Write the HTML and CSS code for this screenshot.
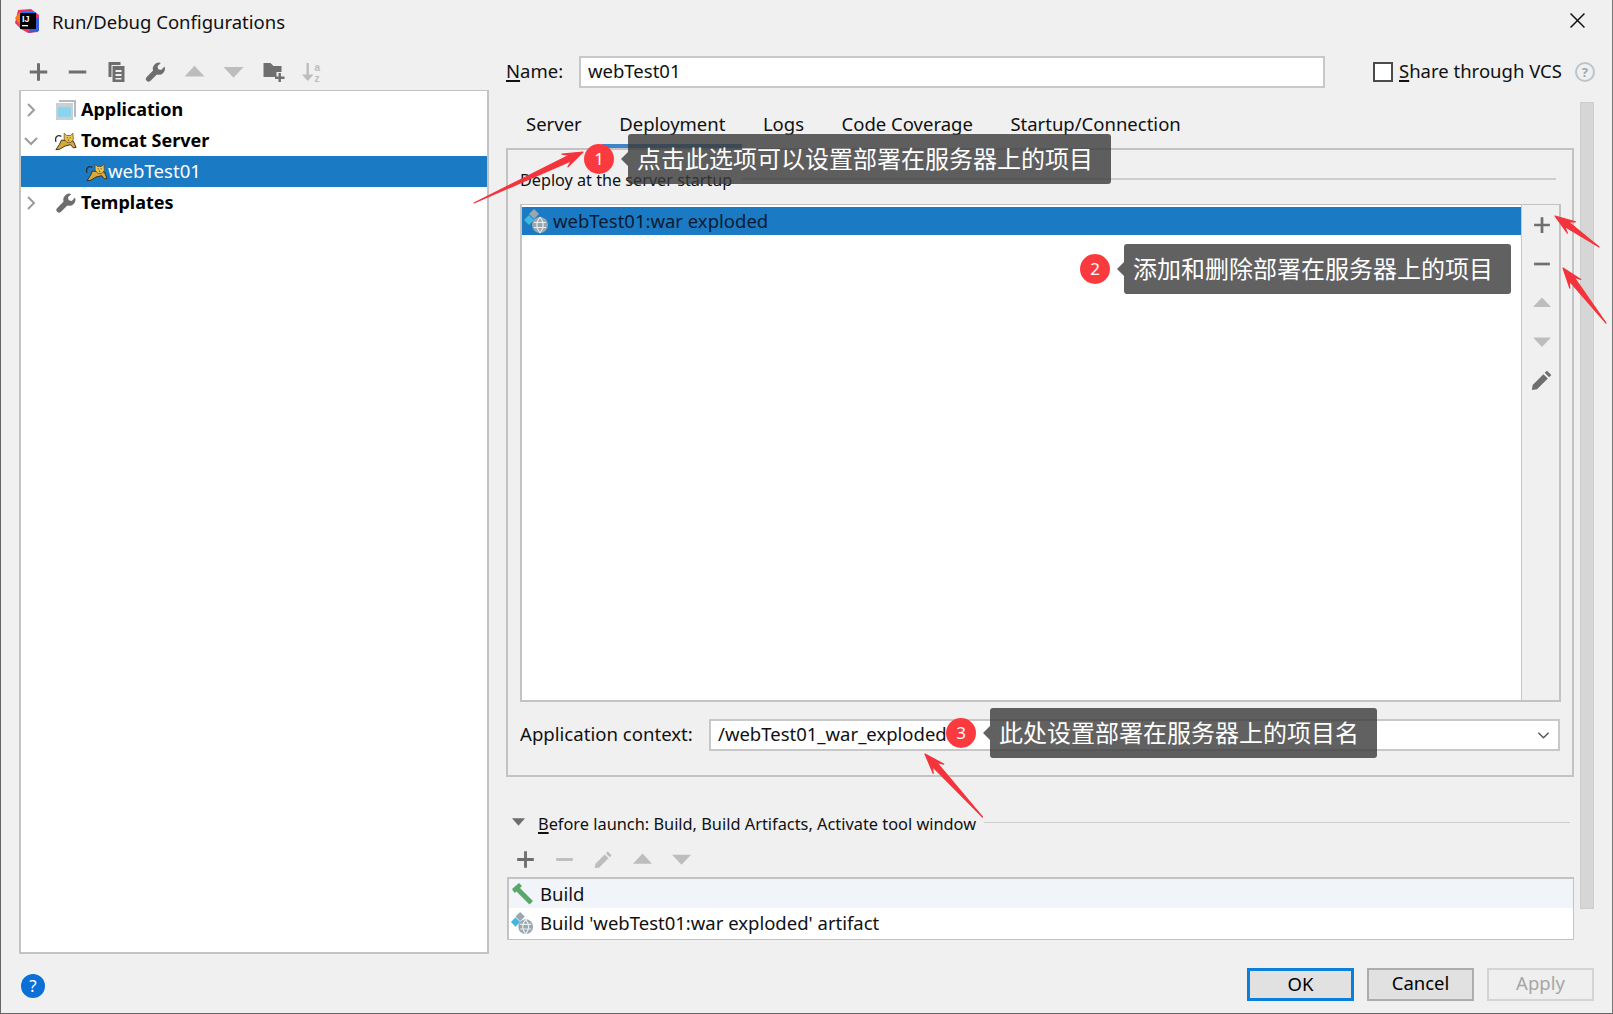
FILE: index.html
```html
<!DOCTYPE html>
<html lang="en">
<head>
<meta charset="utf-8">
<title>Run/Debug Configurations</title>
<link rel="stylesheet" href="styles.css">
</head>
<body>
<svg class="sprite" width="0" height="0" aria-hidden="true">
  <defs>
    <symbol id="i-plus" viewBox="0 0 16 16"><path d="M6.800 1h2.400v5.800H15v2.400H9.200V15H6.800V9.200H1V6.800h5.800z"/></symbol>
    <symbol id="i-minus" viewBox="0 0 16 16"><path d="M1 6.800h14v2.400H1z"/></symbol>
    <symbol id="i-up" viewBox="0 0 16 16"><path d="M8 3l8 8.500H0z"/></symbol>
    <symbol id="i-down" viewBox="0 0 16 16"><path d="M0 4h16l-8 8.500z"/></symbol>
    <symbol id="i-pencil" viewBox="0 0 20 20"><path d="M14.500 1.500l4 4-2 2-4-4zM11.300 4.700l4 4L5.500 18.500 0.800 19.200l.7-4.700z"/></symbol>
    <symbol id="i-wrench" viewBox="0 0 20 20"><path d="M19 4.600l-3.300 3.300-3-.7-.7-3L15.300 1a6 6 0 0 0-7.700 7.600L1 15.200a2.700 2.700 0 0 0 3.800 3.800l6.600-6.600A6 6 0 0 0 19 4.600z"/></symbol>
    <symbol id="i-tomcat" viewBox="0 0 24 20">
      <path d="M1 11C-.5 5 3 3 7 5" fill="none" stroke="#2e2e2e" stroke-width="1.400"/>
      <path d="M7 9l13 1 3 7-3 .5-3-3.500-6 1.500-6 3.500-4 .5 4-6z" fill="#d8a93a" stroke="#2e2a1c" stroke-width="1" stroke-linejoin="round"/>
      <path d="M10 1.500L12.500 4h4.500L19.500 1.500 20 8l-2.500 3.500h-4.500L10 8z" fill="#f0c452" stroke="#5a4a20" stroke-width=".8" stroke-linejoin="round"/>
      <path d="M12.800 6.500h1M16 6.500h1M14 9h1.500" stroke="#222" stroke-width="1"/>
    </symbol>
    <symbol id="i-artifact" viewBox="0 0 26 26">
      <path d="M11 1l5 5-5 5-5-5z" fill="#9aa7b0"/>
      <path d="M6 7l5 5-5 5-5-5z" fill="#40b6e0"/>
      <circle cx="17" cy="17" r="8" fill="#9aa7b0"/>
      <path d="M11 14.500h12M11 19.500h12M17 9c-4 5-4 11 0 16M17 9c4 5 4 11 0 16" fill="none" stroke="#e8eef2" stroke-width="1.200"/>
    </symbol>
  </defs>
</svg>

<div class="window">
  <header class="titlebar">
    <svg class="logo" viewBox="0 0 24 24">
      <path d="M3 1L16 0l8 6-1 17-10 1-7-4-6-6z" fill="#e8336d"/>
      <path d="M0 9l5-6 5 8-5 5z" fill="#f97a12"/>
      <path d="M14 24l10-2V8l-7 4z" fill="#3a5bd9"/>
      <path d="M6 3h15v15l-15 1z" fill="#087cfa"/>
      <rect x="5" y="4" width="16" height="16" fill="#000"/>
      <rect x="7" y="16" width="6" height="1.300" fill="#fff"/>
      <text x="7" y="13" class="logo-text">IJ</text>
    </svg>
    <span class="title">Run/Debug Configurations</span>
    <svg class="close" viewBox="0 0 14 14"><path d="M.5.5l13 13M13.500.5l-13 13" stroke="#111" stroke-width="1.400" fill="none"/></svg>
  </header>

  <div class="main">
    <aside class="left">
      <div class="toolbar tree-tools">
        <svg class="ic dark"><use href="#i-plus"/></svg>
        <svg class="ic dark"><use href="#i-minus"/></svg>
        <svg class="ic dark" viewBox="0 0 18 20"><path d="M1 0h12v3H4v12H1zM5 4h12v16H5zM8 8v2h6V8zm0 4v2h6v-2zm0 4v1.500h6V16z" fill-rule="evenodd"/></svg>
        <svg class="ic dark"><use href="#i-wrench"/></svg>
        <svg class="ic off"><use href="#i-up"/></svg>
        <svg class="ic off"><use href="#i-down"/></svg>
        <svg class="ic dark" viewBox="-2 0 22 20"><path d="M0 1h7l3 3h8v6h-5v5H0z"/><path d="M15 11h2.400v3.500H21v2.400h-3.600V20H15v-3.100h-3.500v-2.400H15z"/></svg>
        <svg class="ic off sort" viewBox="0 0 20 20"><path d="M5 1h2.400v11.500H12L6.200 19 .5 12.500H5z"/><text x="13" y="9" class="sort-text">a</text><text x="13" y="19.500" class="sort-text">z</text></svg>
      </div>
      <div class="tree">
        <div class="row">
          <svg class="chev" viewBox="0 0 10 14"><path d="M2 1l6 6-6 6" fill="none" stroke="#9c9c9c" stroke-width="2"/></svg>
          <svg class="node" viewBox="0 0 20 20"><path d="M3 0h17v17h-2V2H3z" fill="#b5bcc1"/><rect x="0" y="3" width="17" height="17" fill="#c9d0d5"/><rect x="2" y="7" width="13" height="10" fill="#8bd3ef"/></svg>
          <span class="tree-label">Application</span>
        </div>
        <div class="row">
          <svg class="chev" viewBox="0 0 14 10"><path d="M1 2l6 6 6-6" fill="none" stroke="#9c9c9c" stroke-width="2"/></svg>
          <svg class="node"><use href="#i-tomcat"/></svg>
          <span class="tree-label">Tomcat Server</span>
        </div>
        <div class="row selected">
          <svg class="node child"><use href="#i-tomcat"/></svg>
          <span class="tree-child">webTest01</span>
        </div>
        <div class="row">
          <svg class="chev" viewBox="0 0 10 14"><path d="M2 1l6 6-6 6" fill="none" stroke="#9c9c9c" stroke-width="2"/></svg>
          <svg class="node wrench"><use href="#i-wrench"/></svg>
          <span class="tree-label">Templates</span>
        </div>
      </div>
      <div class="help-round">?</div>
    </aside>

    <section class="right">
      <div class="name-row">
        <label class="name-label"><u>N</u>ame:</label>
        <div class="field name-field">webTest01</div>
        <span class="checkbox"></span>
        <span class="share"><u>S</u>hare through VCS</span>
        <span class="help-small">?</span>
      </div>

      <div class="body">
        <div class="content">
          <nav class="tabs">
            <span class="tab">Server</span>
            <span class="tab active">Deployment</span>
            <span class="tab">Logs</span>
            <span class="tab">Code Coverage</span>
            <span class="tab">Startup/Connection</span>
          </nav>
          <div class="panel">
            <div class="group-title"><span>Deploy at the server startup</span><i class="rule"></i></div>
            <div class="deploy-list">
              <div class="deploy-rows">
                <div class="deploy-row">
                  <svg class="art"><use href="#i-artifact"/></svg>
                  <span>webTest01:war exploded</span>
                </div>
              </div>
              <div class="deploy-tools">
                <svg class="ic-side dark"><use href="#i-plus"/></svg>
                <svg class="ic-side dark"><use href="#i-minus"/></svg>
                <svg class="ic-side off"><use href="#i-up"/></svg>
                <svg class="ic-side off"><use href="#i-down"/></svg>
                <svg class="ic-side dark tall"><use href="#i-pencil"/></svg>
              </div>
            </div>
            <div class="context-row">
              <span class="context-label">Application context:</span>
              <div class="field context-field">
                <span>/webTest01_war_exploded</span>
                <svg class="combo" viewBox="0 0 14 9"><path d="M1.500 1.500L7 7l5.500-5.500" fill="none" stroke="#555" stroke-width="1.500"/></svg>
              </div>
            </div>
          </div>

          <div class="before">
            <svg class="tri" viewBox="0 0 14 8"><path d="M0 0h14L7 8z" fill="#6e6e6e"/></svg>
            <span class="before-label"><u>B</u>efore launch: Build, Build Artifacts, Activate tool window</span>
            <i class="rule thin"></i>
          </div>
          <div class="toolbar before-tools">
            <svg class="ic dark"><use href="#i-plus"/></svg>
            <svg class="ic off"><use href="#i-minus"/></svg>
            <svg class="ic off tall"><use href="#i-pencil"/></svg>
            <svg class="ic off"><use href="#i-up"/></svg>
            <svg class="ic off"><use href="#i-down"/></svg>
          </div>
          <div class="task-list">
            <div class="task first">
              <svg class="task-icon" viewBox="0 0 24 22"><path d="M2 6l7-6 3 3-2 2 13 13-3.500 3.500L6.500 8.500 4.500 10z" fill="#59a869"/></svg>
              <span>Build</span>
            </div>
            <div class="task">
              <svg class="task-icon"><use href="#i-artifact"/></svg>
              <span>Build 'webTest01:war exploded' artifact</span>
            </div>
          </div>
        </div>
        <div class="scrollbar"></div>
      </div>

      <footer class="buttons">
        <button class="btn primary">OK</button>
        <button class="btn">Cancel</button>
        <button class="btn disabled">Apply</button>
      </footer>
    </section>
  </div>
</div>

<div class="note note-1"><span class="badge">1</span><span class="bubble">点击此选项可以设置部署在服务器上的项目</span></div>
<div class="note note-2"><span class="badge">2</span><span class="bubble">添加和删除部署在服务器上的项目</span></div>
<div class="note note-3"><span class="badge">3</span><span class="bubble">此处设置部署在服务器上的项目名</span></div>

<svg class="arrows" viewBox="0 0 1613 1014">
  <polygon points="474,203 569,155.200 561.900,154.200 583,152 567.900,166.800 571.600,160.600"/>
  <polygon points="1599,247 1568.200,221.600 1575.400,221.800 1555,216 1567.400,233.200 1564.800,226.600"/>
  <polygon points="1606,323 1574,277.200 1580.800,279.500 1563,268 1569.800,288.100 1569.200,280.800"/>
  <polygon points="982.500,817 936.600,762.300 943.700,764.100 925,754 933.300,773.500 932.200,766.300"/>
</svg>
</body>
</html>
```

FILE: styles.css
```css
* { box-sizing: border-box; }
html, body { margin: 0; padding: 0; }
body {
  position: relative;
  width: 1613px;
  height: 1014px;
  overflow: hidden;
  font-family: "Noto Sans", "Liberation Sans", sans-serif;
  font-size: 18.5px;
  color: #111;
  background: #f0f0f0;
}
.sprite { position: absolute; }
u { text-underline-offset: 2px; text-decoration-thickness: 2px; }

.window {
  width: 1613px;
  height: 1014px;
  background: #f0f0f0;
  border-left: 1px solid #666;
  border-right: 1px solid #777;
  border-bottom: 1px solid #666;
}

/* title bar */
.titlebar {
  height: 44px;
  display: flex;
  align-items: center;
  padding-left: 14px;
  padding-right: 27px;
}
.logo { width: 24px; height: 24px; margin-right: 13px; margin-top: -2px; }
.logo-text { font: 700 9px "Liberation Sans", sans-serif; fill: #fff; }
.title { flex: 1; padding-bottom: 2px; }
.close { width: 15px; height: 15px; margin-top: -3px; }

/* layout */
.main { display: flex; padding-left: 18px; }
.left { width: 470px; flex: none; }
.right { width: 1106px; margin-left: 17px; flex: none; }

.toolbar { display: flex; align-items: center; }
.tree-tools { height: 46px; padding-top: 10px; }
.ic { width: 39px; height: 20px; flex: none; }
.dark { fill: #6e6e6e; }
.off { fill: #bdbdbd; }
.tall { height: 24px; }
.sort { overflow: visible; }
.sort-text { font: 700 10px "Liberation Sans", sans-serif; fill: #bdbdbd; }

/* tree */
.tree {
  height: 864px;
  background: #fff;
  border: 2px solid #c3c3c3;
  border-top-width: 1px;
  padding-top: 3px;
}
.row { height: 31px; display: flex; align-items: center; }
.chev { width: 14px; height: 14px; margin-left: 3px; flex: none; }
.node { width: 22px; height: 20px; margin-left: 17px; margin-right: 4px; flex: none; fill: #6e6e6e; }
.node.child { margin-left: 65px; margin-right: 0; }
.node.wrench { width: 20px; margin-left: 18px; margin-right: 5px; }
.tree-label { font-weight: 700; font-size: 18px; color: #000; padding-bottom: 2px; }
.tree-child { font-size: 18.600px; color: #fff; padding-bottom: 2px; }
.selected { background: #1a7ac4; }

.help-round {
  width: 24px;
  height: 24px;
  margin: 20px 0 0 2px;
  border-radius: 50%;
  background: #0a6fd6;
  color: #fff;
  font-size: 17px;
  line-height: 24px;
  text-align: center;
}

/* name row */
.name-row { height: 32px; margin-top: 12px; display: flex; align-items: center; }
.name-label { width: 73px; flex: none; padding-bottom: 4px; }
.field {
  height: 32px;
  background: #fff;
  border: 2px solid #c8c8c8;
  display: flex;
  align-items: center;
  padding: 0 0 4px 7px;
}
.name-field { width: 746px; }
.checkbox {
  width: 20px;
  height: 20px;
  margin-left: 48px;
  background: #fff;
  border: 2px solid #4a4a4a;
  flex: none;
}
.share { margin-left: 6px; padding-bottom: 4px; }
.help-small {
  width: 20px;
  height: 20px;
  margin-left: 13px;
  border: 2px solid #b9c4cc;
  border-radius: 50%;
  color: #9aa7b0;
  font-size: 13px;
  font-weight: 700;
  line-height: 16px;
  text-align: center;
  flex: none;
}

/* body */
.body { display: flex; margin-top: 14px; }
.content { width: 1068px; flex: none; }
.scrollbar {
  width: 14px;
  height: 807px;
  margin-left: 6px;
  background: #d6d6d6;
  border: 1px solid #cdcdcd;
}

.tabs { height: 46px; padding: 0 0 4px 20px; display: flex; align-items: center; gap: 37.500px; }
.tab { position: relative; }
.tab.active::after {
  content: "";
  position: absolute;
  left: -17px;
  right: -17px;
  top: 33px;
  height: 4px;
  background: #4083c9;
}

.panel {
  height: 629px;
  border: 2px solid #c3c3c3;
  padding: 20px 11px 0 12px;
}
.group-title { display: flex; align-items: center; height: 20px; font-size: 16.200px; margin-right: 5px; }
.rule { flex: 1; height: 2px; background: #cdcdcd; margin: 0 0 2px 10px; }
.rule.thin { height: 1px; margin: 0 0 0 8px; }

.deploy-list {
  height: 498px;
  margin-top: 14px;
  display: flex;
  background: #fff;
  border: 2px solid #c3c3c3;
  border-top-width: 1px;
}
.deploy-rows { flex: 1; padding-top: 2px; }
.deploy-row {
  height: 28px;
  background: #1a7ac4;
  display: flex;
  align-items: center;
  padding: 0 0 2px 1px;
  color: #0b1a33;
}
.art { width: 26px; height: 26px; margin: 2px 4px 0 0; flex: none; }
.deploy-tools {
  width: 38px;
  flex: none;
  background: #f0f0f0;
  border-left: 1px solid #c8c8c8;
  padding: 11px 0 0 2px;
  display: flex;
  flex-direction: column;
  align-items: center;
  gap: 21px;
}
.ic-side { width: 18px; height: 18px; flex: none; }
.ic-side.tall { height: 22px; width: 22px; margin-top: -3px; }

.context-row { display: flex; align-items: center; margin-top: 17px; }
.context-label { width: 189px; flex: none; font-size: 18.600px; padding-bottom: 4px; }
.context-field { flex: 1; justify-content: space-between; padding-right: 8px; margin-right: 1px; }
.combo { width: 13px; height: 9px; margin-top: 4px; }

/* before launch */
.before { display: flex; align-items: center; height: 22px; margin-top: 34px; margin-left: 6px; margin-right: 4px; }
.tri { width: 13px; height: 8px; flex: none; margin-right: 13px; }
.before-label { font-size: 16.350px; padding-top: 4px; }
.before-tools { height: 28px; margin-top: 12px; }
.before-tools .ic { height: 19px; }
.task-list {
  height: 63px;
  margin-top: 4px;
  margin-left: 1px;
  background: #fff;
  border: 2px solid #c3c3c3;
  border-bottom-width: 1px;
  border-right-width: 1px;
}
.task { height: 29px; display: flex; align-items: center; }
.task.first { background: #f1f5fa; }
.task-icon { width: 24px; height: 24px; margin: 0 6px 0 1px; flex: none; }

/* buttons */
.buttons { display: flex; justify-content: flex-end; gap: 13px; padding-right: 18px; margin-top: 28px; }
.btn {
  width: 107px;
  height: 33px;
  font: inherit;
  color: #000;
  background: #e1e1e1;
  border: 2px solid #adadad;
  border-radius: 0;
  padding: 0 0 5px;
}
.btn.primary { border: 3px solid #0a7fdc; }
.btn.disabled { background: #efefef; border-color: #d4d4d4; color: #a6a6a6; }

/* annotations */
.note { position: absolute; display: flex; align-items: center; }
.note-1 { left: 584px; top: 134px; }
.note-2 { left: 1080px; top: 244px; }
.note-3 { left: 946px; top: 708px; }
.badge {
  width: 30px;
  height: 30px;
  margin-right: 14px;
  border-radius: 50%;
  background: #fb3a3f;
  color: #fff;
  font-size: 17px;
  line-height: 29px;
  text-align: center;
  flex: none;
}
.bubble {
  position: relative;
  height: 50px;
  padding: 0 18px 0 9px;
  border-radius: 3px;
  background: rgba(58, 58, 58, .8);
  color: #fff;
  font-family: "Noto Sans CJK SC", sans-serif;
  font-size: 24px;
  line-height: 48px;
  white-space: nowrap;
}
.bubble::before {
  content: "";
  position: absolute;
  left: -7px;
  top: 18px;
  border-style: solid;
  border-width: 7px 7px 7px 0;
  border-color: transparent rgba(58, 58, 58, .8) transparent transparent;
}
.arrows { position: absolute; left: 0; top: 0; width: 1613px; height: 1014px; pointer-events: none; }
.arrows polygon { fill: #f4333c; stroke: #f4333c; stroke-width: 1.200px; stroke-linejoin: round; }
```
